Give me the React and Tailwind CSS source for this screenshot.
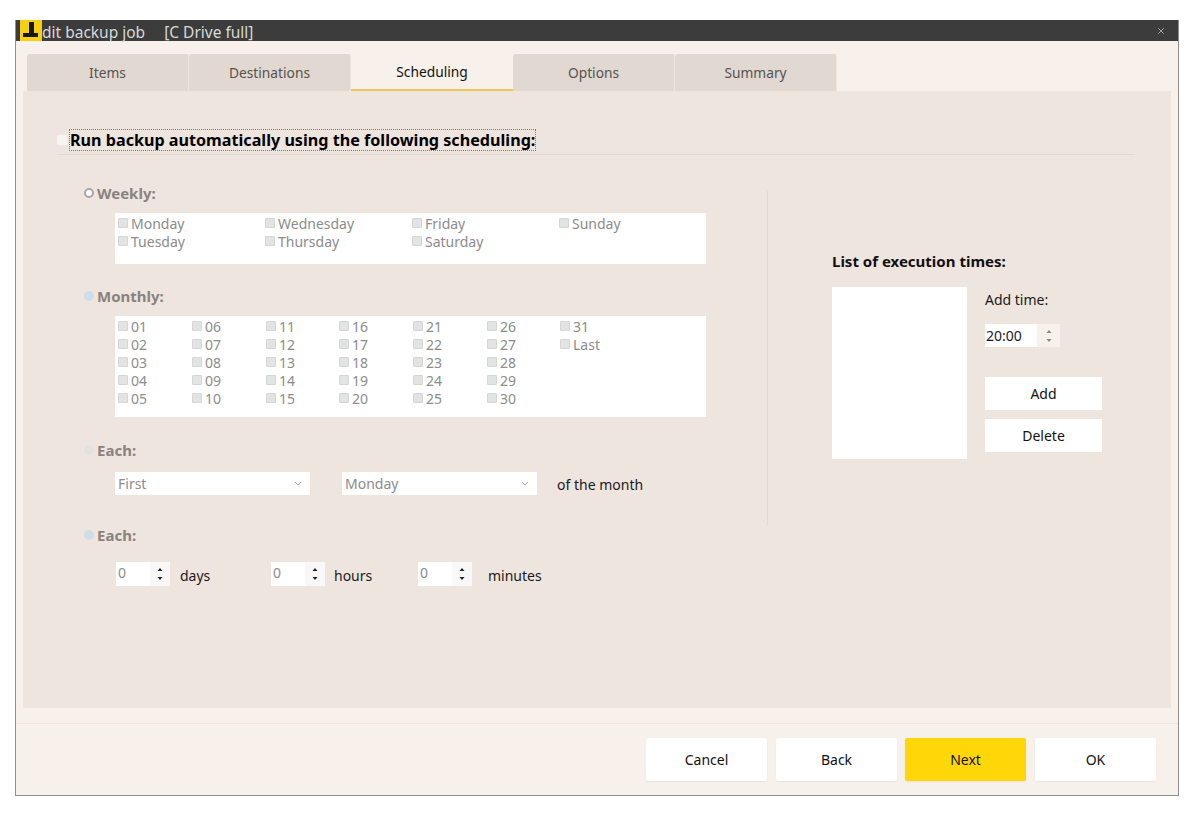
import { X } from 'lucide-react';

const FONT = "font-['Noto_Sans','Open_Sans',sans-serif]";
const TABS = ['Items', 'Destinations', 'Scheduling', 'Options', 'Summary'];
const WEEK_ROWS = [['Monday', 'Wednesday', 'Friday', 'Sunday'], ['Tuesday', 'Thursday', 'Saturday', '']];
const MONTH_ROWS = [
  ['01', '06', '11', '16', '21', '26', '31'],
  ['02', '07', '12', '17', '22', '27', 'Last'],
  ['03', '08', '13', '18', '23', '28', ''],
  ['04', '09', '14', '19', '24', '29', ''],
  ['05', '10', '15', '20', '25', '30', ''],
];

function Check({ label }) {
  if (!label) return <div />;
  return (
    <div className="flex h-[18px] items-center gap-[3px] text-[14px] text-[#8c8c8c]">
      <span className="h-[10px] w-[10px] rounded-[1px] border border-[#d5d7d7] bg-[#e2e4e4]" />
      <span>{label}</span>
    </div>
  );
}

function Radio({ label, className, dot }) {
  return (
    <div className={`flex h-5 items-center gap-[3px] pl-[1px] text-[15px] font-bold text-[#8a827d] ${className}`}>
      <span className={`flex h-[10px] w-[10px] items-center justify-center rounded-full ${dot}`} />
      <span>{label}</span>
    </div>
  );
}

function Combo({ value, className }) {
  return (
    <div className={`flex h-[23px] w-[195px] items-center justify-between bg-white pl-[3px] pr-[8px] text-[14px] text-[#8c8c8c] ${className}`}>
      <span>{value}</span>
      <svg width="8" height="5" viewBox="0 0 8 5" fill="none" stroke="#a8a8a8" strokeWidth="1"><path d="M1 1l3 3 3-3" /></svg>
    </div>
  );
}

function Arrows({ color }) {
  return (
    <svg width="6" height="14" viewBox="0 0 6 14" fill={color}>
      <path d="M3 1l2.5 3h-5zM3 13l2.5-3h-5z" />
    </svg>
  );
}

function Spin({ value, label, gap, className }) {
  return (
    <div className={`flex items-center ${className}`}>
      <div className="flex h-6 w-[54px] bg-white text-[14px] text-[#8c8c8c]">
        <span className="flex-1 pl-[2px] leading-[22px]">{value}</span>
        <span className="flex w-5 items-center justify-center bg-[#f8f8f8]"><Arrows color="#222" /></span>
      </div>
      <span className={`pt-[2px] text-[14px] text-[#1a1a1a] ${gap}`}>{label}</span>
    </div>
  );
}

function SideButton({ label, className }) {
  return (
    <button className={`h-[33px] w-[117px] bg-white text-[14px] text-[#111] ${className}`}>{label}</button>
  );
}

function FooterButton({ label, primary }) {
  return (
    <button className={`h-[43px] w-[121px] rounded-[2px] text-[14px] text-[#111] shadow-[0_1px_2px_rgba(0,0,0,0.06)] ${primary ? '-ml-px bg-[#ffd608]' : 'bg-white'}`}>{label}</button>
  );
}

export default function App() {
  return (
    <div className={`h-[813px] w-[1200px] bg-white pl-[15px] pt-5 ${FONT}`}>
      <div className="flex h-[776px] w-[1164px] flex-col border-b border-r border-l border-[#8f8f8f] bg-[#f8f0ea]">
        <div className="flex h-[21px] shrink-0 items-center bg-[#3c3c3c] pr-3 text-[15.5px] text-[#d8d8d8]">
          <div className="h-[21px] w-[26px] shrink-0 pl-1">
            <svg width="22" height="21" viewBox="0 0 22 21">
              <rect width="22" height="21" fill="#f5cf12" />
              <path d="M9 2h5v11h4v4H3v-4h6z" fill="#1a1608" />
            </svg>
          </div>
          <span className="pt-[3px] leading-[21px]">dit backup job</span>
          <span className="ml-[19px] pt-[3px] leading-[21px]">[C Drive full]</span>
          <X className="ml-auto h-[10px] w-[10px] text-[#b8b8b8]" strokeWidth={2} />
        </div>

        <div className="flex flex-1 flex-col px-[7px]">
          <div className="flex h-[50px] items-end pl-[4px]">
            {TABS.map((tab) => (
              tab === 'Scheduling' ? (
                <div key={tab} className="flex h-[39px] w-[162px] items-center justify-center rounded-t-[3px] border-b-2 border-[#f2c55c] bg-[#f8f0ea] pt-[3px] text-[13.75px] text-[#111]">{tab}</div>
              ) : (
                <div key={tab} className="flex h-[37px] w-[162px] items-center justify-center rounded-t-[3px] border-r border-[#eee5df] bg-[#e0d8d1] pt-px text-[13.75px] text-[#57524e]">{tab}</div>
              )
            ))}
          </div>

          <div className="h-[617px] w-[1148px] bg-[#eee5df] pl-[34px] pt-[38px]">
            <div className="flex h-[26px] w-[1078px] items-start border-b border-[#e0d8d1]">
              <span className="mt-[6px] h-[10px] w-[10px] shrink-0 bg-[#f8f4f1]" />
              <span className="ml-[2px] border border-dotted border-[#777] text-[16.15px] font-bold leading-[20px] text-black">Run backup automatically using the following scheduling:</span>
            </div>

            <div className="mt-[36px] flex">
              <div className="h-[334px] w-[711px] border-r border-[#e0d8d1] pl-[26px]">
                <Radio label="Weekly:" className="-mt-2" dot="border-2 border-[#a6a6a6] bg-white" />
                <div className="ml-[32px] mt-[10px] h-[51px] w-[591px] bg-white pl-[3px] pt-[1px]">
                  {WEEK_ROWS.map((row) => (
                    <div key={row[0]} className="grid grid-cols-[147px_147px_147px_147px]">
                      {row.map((d, i) => <Check key={i} label={d} />)}
                    </div>
                  ))}
                </div>

                <Radio label="Monthly:" className="mt-[22px]" dot="bg-[#cfdde8]" />
                <div className="ml-[32px] mt-[10px] h-[101px] w-[591px] bg-white pl-[3px] pt-[1px]">
                  {MONTH_ROWS.map((row) => (
                    <div key={row[0]} className="grid grid-cols-[74px_74px_73px_74px_74px_73px_74px]">
                      {row.map((d, i) => <Check key={i} label={d} />)}
                    </div>
                  ))}
                </div>

                <Radio label="Each:" className="mt-[23px]" dot="bg-[#e2e2df]" />
                <div className="ml-[32px] mt-[12px] flex items-start">
                  <Combo value="First" />
                  <Combo value="Monday" className="ml-[32px]" />
                  <span className="ml-[20px] mt-[2px] text-[14px] text-[#1a1a1a]">of the month</span>
                </div>

                <Radio label="Each:" className="mt-[30px]" dot="bg-[#cfdde8]" />
                <div className="ml-[33px] mt-[17px] flex">
                  <Spin value="0" label="days" gap="ml-[10px]" className="w-[155px]" />
                  <Spin value="0" label="hours" gap="ml-[9px]" className="w-[147px]" />
                  <Spin value="0" label="minutes" gap="ml-[16px]" />
                </div>
              </div>

              <div className="pl-[64px] pt-[60px]">
                <div className="text-[15px] font-bold leading-5 text-[#111]">List of execution times:</div>
                <div className="mt-[16px] flex">
                  <div className="h-[172px] w-[135px] bg-white" />
                  <div className="ml-[18px] pt-[3px]">
                    <div className="text-[14px] leading-5 text-[#1a1a1a]">Add time:</div>
                    <div className="mt-[14px] flex h-[23px] w-[75px] bg-[#f8f0ea] text-[14px] text-[#1a1a1a]">
                      <span className="w-[52px] bg-white pl-[1px] leading-[23px]">20:00</span>
                      <span className="flex flex-1 items-center justify-center"><Arrows color="#888" /></span>
                    </div>
                    <SideButton label="Add" className="mt-[30px] block" />
                    <SideButton label="Delete" className="mt-[9px] block" />
                  </div>
                </div>
              </div>
            </div>
          </div>
        </div>

        <div className="mt-[15px] flex h-[72px] shrink-0 items-start justify-end gap-[9px] border-t border-[#ece3dc] pr-[22px] pt-[14px]">
          <FooterButton label="Cancel" />
          <FooterButton label="Back" />
          <FooterButton label="Next" primary />
          <FooterButton label="OK" />
        </div>
      </div>
    </div>
  );
}
